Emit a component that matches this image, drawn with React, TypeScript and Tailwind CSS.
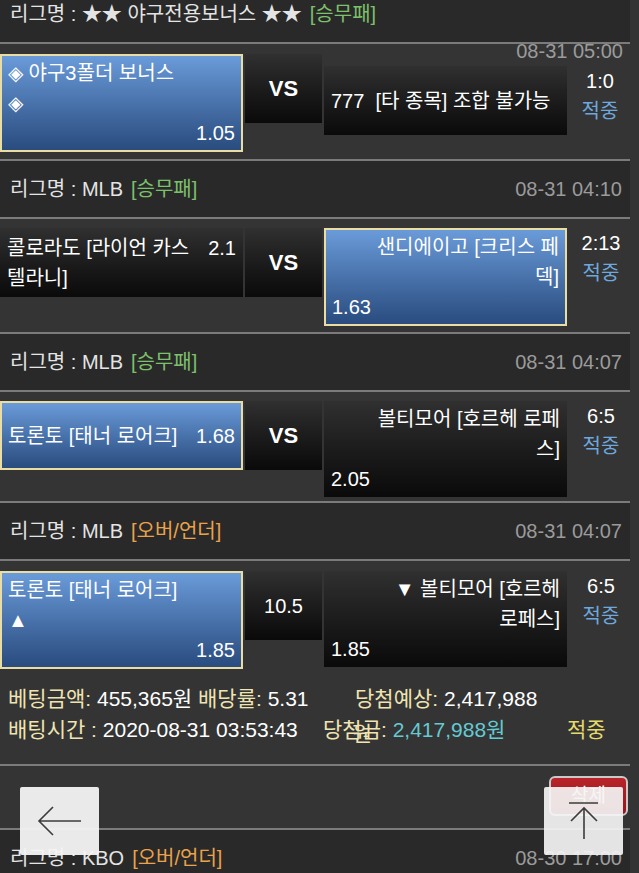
import React from 'react';

type Ln = { l?: React.ReactNode; r?: React.ReactNode };

const dark = 'bg-linear-to-b from-[#303030] to-[#0a0a0a]';

function Pick({ lines, blue }: { lines: Ln[]; blue?: boolean }) {
  return (
    <div
      className={`w-[243px] shrink-0 min-h-[69px] flex flex-col justify-center text-white ${
        blue
          ? 'bg-linear-to-b from-[#6a9bd9] to-[#2a4c7f] border-2 border-[#e9dda4] px-[6px] py-[2px]'
          : `${dark} px-[7px] py-[3px]`
      }`}
    >
      {lines.map((ln, i) => (
        <div key={i} className="flex justify-between h-[30px] leading-[30px] whitespace-pre">
          <span>{ln.l}</span>
          <span>{ln.r}</span>
        </div>
      ))}
    </div>
  );
}

function Mid({ children, bold }: { children: React.ReactNode; bold?: boolean }) {
  return (
    <div
      className={`w-[77px] shrink-0 h-[69px] flex items-center justify-center text-white ${dark} ${
        bold ? 'font-bold text-[22px]' : ''
      }`}
    >
      {children}
    </div>
  );
}

function Score({ score }: { score: string }) {
  return (
    <div className="flex-1 flex flex-col items-center leading-[30px] pl-[3px]">
      <span className="text-white">{score}</span>
      <span className="text-[#6ea8de]">적중</span>
    </div>
  );
}

function Header({
  league,
  type,
  orange,
  date,
  className = '',
}: {
  league: string;
  type: string;
  orange?: boolean;
  date?: string;
  className?: string;
}) {
  return (
    <>
      <div className={`h-[56px] bg-[#292929] flex items-center justify-between pl-[10px] pr-[8px] ${className}`}>
        <span className="text-[#e4e4e4] whitespace-nowrap">
          리그명 : {league}
          <span className={`ml-[8px] ${orange ? 'text-[#eaa349]' : 'text-[#7dc06b]'}`}>{type}</span>
        </span>
        {date && <span className="text-[#9b9b9b]">{date}</span>}
      </div>
      <div className="h-[2px] bg-[#7b7b7b]" />
    </>
  );
}

const Line = () => <div className="h-[2px] bg-[#7b7b7b]" />;

export default function App() {
  return (
    <div className="w-[639px] h-[873px] overflow-hidden bg-[#343434] text-[20px] font-['Liberation_Sans','Noto_Sans_CJK_KR',sans-serif]">
      <div className="w-[630px]">
        <Header league="★★ 야구전용보너스 ★★" type="[승무패]" className="-mt-[14px]" />
        <div className="relative flex items-start gap-[2px] pt-[10px] pb-[7px]">
          <span className="absolute -top-[8px] right-[7px] leading-[30px] text-[#9b9b9b]">08-31 05:00</span>
          <Pick blue lines={[{ l: '◈ 야구3폴더 보너스' }, { l: '◈' }, { r: '1.05' }]} />
          <Mid bold>VS</Mid>
          <div className="flex-1 flex items-start mt-[12px]">
            <Pick lines={[{ l: '777  [타 종목] 조합 불가능' }]} />
            <Score score="1:0" />
          </div>
        </div>
        <Line />

        <Header league="MLB" type="[승무패]" date="08-31 04:10" />
        <div className="flex items-start gap-[2px] pt-[9px] pb-[6px]">
          <Pick lines={[{ l: '콜로라도 [라이언 카스', r: '2.1' }, { l: '텔라니]' }]} />
          <Mid bold>VS</Mid>
          <Pick blue lines={[{ r: '샌디에이고 [크리스 페' }, { r: '덱]' }, { l: '1.63' }]} />
          <Score score="2:13" />
        </div>
        <Line />

        <Header league="MLB" type="[승무패]" date="08-31 04:07" />
        <div className="flex items-start gap-[2px] pt-[9px] pb-[4px]">
          <Pick blue lines={[{ l: '토론토 [태너 로어크]', r: '1.68' }]} />
          <Mid bold>VS</Mid>
          <Pick lines={[{ r: '볼티모어 [호르헤 로페' }, { r: '스]' }, { l: '2.05' }]} />
          <Score score="6:5" />
        </div>
        <Line />

        <Header league="MLB" type="[오버/언더]" orange date="08-31 04:07" />
        <div className="flex items-start gap-[2px] pt-[10px]">
          <Pick blue lines={[{ l: '토론토 [태너 로어크]' }, { l: '▲' }, { r: '1.85' }]} />
          <Mid>10.5</Mid>
          <Pick lines={[{ r: '▼ 볼티모어 [호르헤' }, { r: '로페스]' }, { l: '1.85' }]} />
          <Score score="6:5" />
        </div>
        <div className="pl-[8px] pt-[14px] pb-[19px] text-[21px] leading-[31px] whitespace-nowrap">
          <div className="flex">
            <span className="w-[347px]">
              <span className="text-[#f0e4b2]">베팅금액: </span>
              <span className="text-white">455,365원 </span>
              <span className="text-[#f0e4b2]">배당률: </span>
              <span className="text-white">5.31</span>
            </span>
            <span>
              <span className="text-[#f0e4b2]">당첨예상: </span>
              <span className="text-white">2,417,988</span>
            </span>
          </div>
          <div className="flex">
            <span className="w-[315px]">
              <span className="text-[#f0e4b2]">배팅시간 : </span>
              <span className="text-white">2020-08-31 03:53:43</span>
            </span>
            <span className="w-[244px]">
              <span className="text-[#f0e4b2]">
                당첨
                <span className="relative">
                  금<span className="absolute left-[-9px] top-0">원</span>
                </span>
                :{' '}
              </span>
              <span className="text-[#64cad3]">2,417,988원</span>
            </span>
            <span className="text-[#e5da6c]">적중</span>
          </div>
        </div>
        <Line />
        <div className="h-[62px] flex justify-end items-start pt-[10px] pr-[2px]">
          <button
            type="button"
            className="w-[79px] h-[40px] rounded-[6px] border-2 border-[#c9c9c9] bg-linear-to-b from-[#b8242a] to-[#95161b] text-white text-[19px]"
          >
            삭제
          </button>
        </div>
        <Line />
        <Header league="KBO" type="[오버/언더]" orange date="08-30 17:00" />
      </div>

      <button
        type="button"
        className="fixed left-[20px] top-[787px] w-[79px] h-[68px] rounded-[2px] bg-[#f4f4f4]/95 flex items-center justify-center"
      >
        <svg width="79" height="68" viewBox="0 0 79 68" fill="none" stroke="#3c3c3c" strokeWidth="1.6">
          <path d="M19 34 H61 M33 20 L19 34 L33 48" />
        </svg>
      </button>
      <button
        type="button"
        className="fixed left-[544px] top-[787px] w-[79px] h-[68px] rounded-[2px] bg-[#f4f4f4]/92 flex items-center justify-center"
      >
        <svg width="79" height="68" viewBox="0 0 79 68" fill="none" stroke="#3c3c3c" strokeWidth="1.6">
          <path d="M25 16 H54 M40 21 V52 M27 34 L40 21 L53 34" />
        </svg>
      </button>
    </div>
  );
}
